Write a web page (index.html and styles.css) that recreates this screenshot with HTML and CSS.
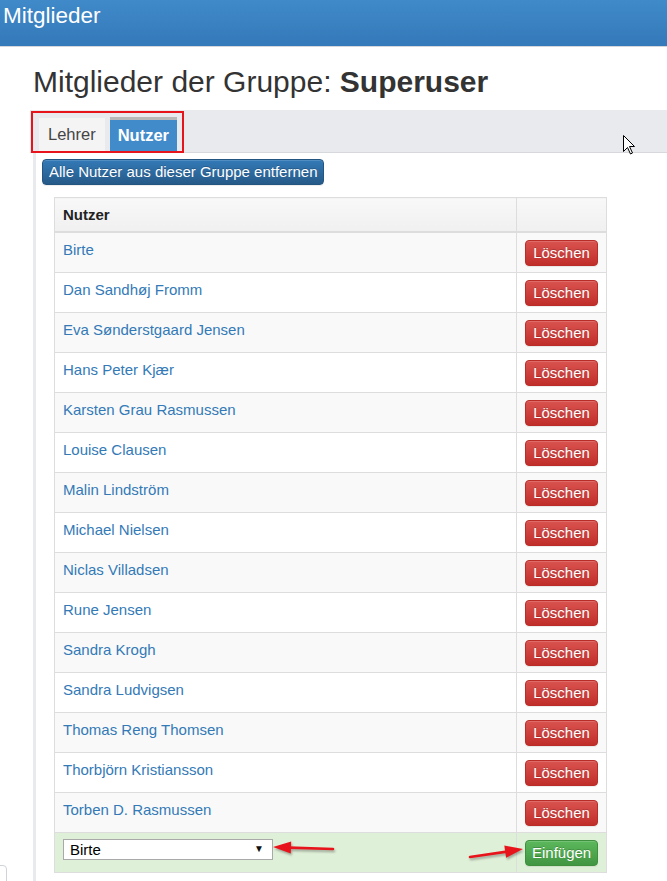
FILE: index.html
```html
<!DOCTYPE html>
<html lang="de">
<head>
<meta charset="utf-8">
<title>Mitglieder</title>
<link rel="stylesheet" href="styles.css">
</head>
<body>
<header class="topbar"><div class="topbar-title">Mitglieder</div></header>
<main class="main">
  <h1 class="page-title">Mitglieder der Gruppe: <strong>Superuser</strong></h1>
  <nav class="tabbar">
    <span class="tab">Lehrer</span>
    <span class="tab tab-active">Nutzer</span>
  </nav>
  <section class="panel">
    <div class="toolbar"><button class="btn btn-primary">Alle Nutzer aus dieser Gruppe entfernen</button></div>
    <table class="members">
      <colgroup><col class="col-name"><col class="col-action"></colgroup>
      <thead><tr><th>Nutzer</th><th></th></tr></thead>
      <tbody>
        <tr><td><a class="name">Birte</a></td><td class="action"><button class="btn btn-danger">Löschen</button></td></tr>
        <tr><td><a class="name">Dan Sandhøj Fromm</a></td><td class="action"><button class="btn btn-danger">Löschen</button></td></tr>
        <tr><td><a class="name">Eva Sønderstgaard Jensen</a></td><td class="action"><button class="btn btn-danger">Löschen</button></td></tr>
        <tr><td><a class="name">Hans Peter Kjær</a></td><td class="action"><button class="btn btn-danger">Löschen</button></td></tr>
        <tr><td><a class="name">Karsten Grau Rasmussen</a></td><td class="action"><button class="btn btn-danger">Löschen</button></td></tr>
        <tr><td><a class="name">Louise Clausen</a></td><td class="action"><button class="btn btn-danger">Löschen</button></td></tr>
        <tr><td><a class="name">Malin Lindström</a></td><td class="action"><button class="btn btn-danger">Löschen</button></td></tr>
        <tr><td><a class="name">Michael Nielsen</a></td><td class="action"><button class="btn btn-danger">Löschen</button></td></tr>
        <tr><td><a class="name">Niclas Villadsen</a></td><td class="action"><button class="btn btn-danger">Löschen</button></td></tr>
        <tr><td><a class="name">Rune Jensen</a></td><td class="action"><button class="btn btn-danger">Löschen</button></td></tr>
        <tr><td><a class="name">Sandra Krogh</a></td><td class="action"><button class="btn btn-danger">Löschen</button></td></tr>
        <tr><td><a class="name">Sandra Ludvigsen</a></td><td class="action"><button class="btn btn-danger">Löschen</button></td></tr>
        <tr><td><a class="name">Thomas Reng Thomsen</a></td><td class="action"><button class="btn btn-danger">Löschen</button></td></tr>
        <tr><td><a class="name">Thorbjörn Kristiansson</a></td><td class="action"><button class="btn btn-danger">Löschen</button></td></tr>
        <tr><td><a class="name">Torben D. Rasmussen</a></td><td class="action"><button class="btn btn-danger">Löschen</button></td></tr>
        <tr class="add-row"><td><span class="select-wrap"><select class="user-select"><option>Birte</option></select></span></td><td class="action"><button class="btn btn-success">Einfügen</button></td></tr>
      </tbody>
    </table>
  </section>
</main>

<div class="highlight-box"></div>
<svg class="arrow arrow-left" width="70" height="24" viewBox="0 0 70 24">
  <line x1="21" y1="11.6" x2="65" y2="13" stroke="#e8141b" stroke-width="2.6" stroke-linecap="round"/>
  <polygon points="5,11 23.2,5.4 22.8,17.6" fill="#e8141b"/>
</svg>
<svg class="arrow arrow-right" width="62" height="24" viewBox="0 0 62 24">
  <line x1="4" y1="17" x2="41" y2="11.6" stroke="#e8141b" stroke-width="2.6" stroke-linecap="round"/>
  <polygon points="57,9 38.3,5.6 40.1,17.8" fill="#e8141b"/>
</svg>
<svg class="cursor" width="14" height="22" viewBox="0 0 14 22">
  <path d="M1.5 1.5 V17.5 L5.5 13.5 L8.5 20 L10.5 19 L7.5 12.5 H12.5 Z" fill="#fff" stroke="#000" stroke-width="1" stroke-linejoin="miter"/>
</svg>
<div class="corner-tab"></div>
</body>
</html>
```

FILE: styles.css
```css
html, body {
  margin: 0;
  padding: 0;
  overflow: hidden;
}
body {
  width: 667px;
  height: 881px;
  position: relative;
  background: #fff;
  color: #333;
  font-family: "Liberation Sans", Arial, sans-serif;
}

.topbar {
  height: 46px;
  background: linear-gradient(#408ac9, #3479b9);
  border-bottom: 1px solid #d3d6da;
}
.topbar-title {
  color: #fff;
  font-size: 22.5px;
  line-height: 32px;
  padding-left: 3px;
}

.main {
  padding-left: 30px;
}
.page-title {
  margin: 18px 0 12px 3px;
  font-size: 30px;
  line-height: 33px;
  font-weight: normal;
  color: #333;
}
.page-title strong {
  font-weight: bold;
}

.tabbar {
  display: flex;
  align-items: flex-end;
  gap: 5px;
  background: #e9eaed;
  border-bottom: 1px solid #d7d8db;
  padding: 7px 0 1px 9px;
}
.tab {
  box-sizing: border-box;
  height: 33px;
  line-height: 33px;
  padding: 0 9px;
  font-size: 16.5px;
  background: #f4f4f4;
  color: #444;
}
.tab-active {
  height: 34px;
  line-height: 31px;
  padding: 0 8px;
  background: #428bca;
  color: #fff;
  font-weight: bold;
  border-top: 3px solid #b9b9b9;
}

.panel {
  margin-left: 3px;
  border-left: 3px solid #e9eaed;
  padding: 6px 0 40px 6px;
}
.toolbar {
  display: flex;
}

.btn {
  display: block;
  box-sizing: border-box;
  font-family: inherit;
  font-size: 15px;
  line-height: 20px;
  padding: 2px 6px;
  border: 1px solid;
  border-radius: 4px;
  color: #fff;
  text-shadow: 0 -1px 0 rgba(0, 0, 0, 0.2);
  box-shadow: inset 0 1px 0 rgba(255, 255, 255, 0.15), 0 1px 1px rgba(0, 0, 0, 0.075);
  cursor: pointer;
}
.btn-primary {
  background: linear-gradient(#337ab7, #265a88);
  border-color: #245580;
}
.btn-danger {
  width: 100%;
  background: linear-gradient(#d9534f, #c12e2a);
  border-color: #b92c28;
}
.btn-success {
  width: 100%;
  background: linear-gradient(#5cb85c, #419641);
  border-color: #3e8f3e;
}

.members {
  margin: 12px 0 0 12px;
  width: 552px;
  table-layout: fixed;
  border-collapse: collapse;
}
.col-name { width: 462px; }
.col-action { width: 90px; }

.members th,
.members td {
  border: 1px solid #ddd;
  text-align: left;
  vertical-align: top;
  font-size: 15px;
}
.members th {
  padding: 7px 8px 7px;
  line-height: 19px;
  font-weight: bold;
  color: #222;
  background: linear-gradient(#f8f8f8, #f0f0f0);
  border-bottom-width: 2px;
}
.members td {
  padding: 7px 8px 6px;
  line-height: 20px;
}
.members tbody tr:nth-child(odd) td {
  background: #f9f9f9;
}
.members tbody tr.add-row td {
  background: #dff0d8;
}
.name {
  color: #337ab7;
  text-decoration: none;
}

.select-wrap {
  position: relative;
  display: block;
  width: 210px;
}
.user-select {
  appearance: none;
  -webkit-appearance: none;
  display: block;
  box-sizing: border-box;
  width: 210px;
  height: 21px;
  margin-top: -1px;
  padding: 0 0 0 6px;
  border: 1px solid #a9a9a9;
  border-radius: 0;
  background: #fff;
  color: #000;
  font-family: inherit;
  font-size: 15px;
  line-height: 19px;
}
.select-wrap::after {
  content: "▼";
  position: absolute;
  right: 9px;
  top: 4px;
  font-size: 10px;
  line-height: 12px;
  color: #111;
  pointer-events: none;
}

/* annotation overlays */
.highlight-box {
  position: absolute;
  left: 31px;
  top: 111px;
  width: 153px;
  height: 42px;
  box-sizing: border-box;
  border: 2px solid #e8141b;
}
.arrow {
  position: absolute;
  filter: drop-shadow(1px 2px 1px rgba(0, 0, 0, 0.3));
}
.arrow-left {
  left: 268px;
  top: 836px;
}
.arrow-right {
  left: 466px;
  top: 840px;
}
.cursor {
  position: absolute;
  left: 622px;
  top: 134px;
}
.corner-tab {
  position: absolute;
  left: -10px;
  top: 865px;
  width: 17px;
  height: 30px;
  box-sizing: border-box;
  border: 1px solid #cfd4da;
  border-radius: 4px;
  background: #fff;
}
```
